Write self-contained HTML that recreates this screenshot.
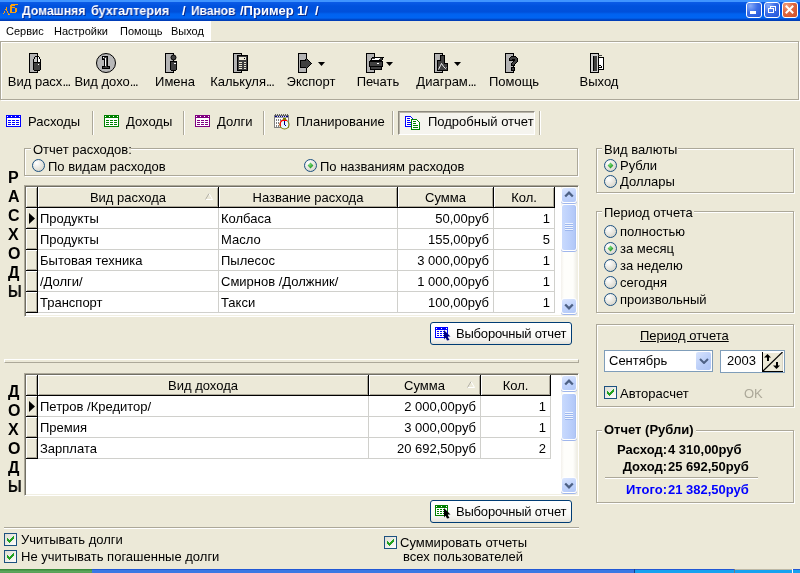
<!DOCTYPE html>
<html><head><meta charset="utf-8"><style>
*{margin:0;padding:0;box-sizing:border-box}
html,body{width:800px;height:573px;overflow:hidden;background:#ECE9D8;font-family:"Liberation Sans",sans-serif;font-size:13px;color:#000}
.a{position:absolute;display:block}
.t{position:absolute;white-space:nowrap;line-height:13px;will-change:transform}
.d{letter-spacing:-1px}
</style></head><body>
<div class="a" style="left:0px;top:0px;width:800px;height:21px;background:linear-gradient(#3F94FF 0px,#3F94FF 1.5px,#0A5AE6 2.5px,#0052DE 6px,#0050DA 12px,#0062F0 14px,#0064F2 18px,#0048C8 19.5px,#0038B0 21px)"></div>
<svg class="a" style="left:2px;top:3px;" width="17" height="13" viewBox="0 0 17 13" shape-rendering="crispEdges"><g fill="#F8A00E"><rect x="4" y="4" width="1" height="2"/><rect x="3" y="6" width="2" height="1"/><rect x="4" y="7" width="1" height="1"/><rect x="5" y="8" width="1" height="2"/><rect x="6" y="10" width="1" height="1"/><rect x="6" y="11" width="2" height="1"/><rect x="2" y="8" width="1" height="2"/><rect x="1" y="10" width="1" height="1"/><rect x="9" y="1" width="7" height="1"/><rect x="9" y="2" width="4" height="1"/><rect x="8" y="2" width="2" height="8"/><rect x="10" y="4" width="3" height="1"/><rect x="13" y="5" width="2" height="4"/><rect x="10" y="9" width="4" height="1"/></g></svg>
<div class="t" style="left:22px;top:4px;font-size:13px;font-weight:bold;color:#fff;text-shadow:1px 1px 0 #0A2A8C;transform:scaleX(0.935);transform-origin:0 0">Домашняя</div>
<div class="t" style="left:91px;top:4px;font-size:13px;font-weight:bold;color:#fff;text-shadow:1px 1px 0 #0A2A8C;transform:scaleX(0.97);transform-origin:0 0">бухгалтерия</div>
<div class="t" style="left:182px;top:4px;font-size:13px;font-weight:bold;color:#fff;text-shadow:1px 1px 0 #0A2A8C;transform:scaleX(1);transform-origin:0 0">/</div>
<div class="t" style="left:191px;top:4px;font-size:13px;font-weight:bold;color:#fff;text-shadow:1px 1px 0 #0A2A8C;transform:scaleX(0.92);transform-origin:0 0">Иванов</div>
<div class="t" style="left:240px;top:4px;font-size:13px;font-weight:bold;color:#fff;text-shadow:1px 1px 0 #0A2A8C;transform:scaleX(1.0);transform-origin:0 0">/Пример</div>
<div class="t" style="left:297px;top:4px;font-size:13px;font-weight:bold;color:#fff;text-shadow:1px 1px 0 #0A2A8C;transform:scaleX(1.0);transform-origin:0 0">1/</div>
<div class="t" style="left:315px;top:4px;font-size:13px;font-weight:bold;color:#fff;text-shadow:1px 1px 0 #0A2A8C;transform:scaleX(1);transform-origin:0 0">/</div>
<div class="a" style="left:746px;top:2px;width:16px;height:16px;border:1px solid #fff;border-radius:3px;background:radial-gradient(circle at 25% 20%,#86AAF8 0%,#3C6FE8 45%,#2152D6 100%)"></div>
<div class="a" style="left:764px;top:2px;width:16px;height:16px;border:1px solid #fff;border-radius:3px;background:radial-gradient(circle at 25% 20%,#86AAF8 0%,#3C6FE8 45%,#2152D6 100%)"></div>
<div class="a" style="left:782px;top:2px;width:16px;height:16px;border:1px solid #fff;border-radius:3px;background:radial-gradient(circle at 25% 20%,#F0A080 0%,#E06A44 40%,#D04E26 100%)"></div>
<div class="a" style="left:750px;top:11px;width:6px;height:3px;background:#fff"></div>
<svg class="a" style="left:767px;top:5px;" width="10" height="9" viewBox="0 0 10 9" shape-rendering="crispEdges"><path d="M3 1 H8.5 V6 M3 1 V3" stroke="#fff" stroke-width="1" fill="none"/><rect x="3" y="1" width="6" height="1" fill="#fff"/><rect x="1.5" y="3.5" width="5" height="4" fill="none" stroke="#fff"/><rect x="1" y="3" width="6" height="1" fill="#fff"/></svg>
<svg class="a" style="left:785px;top:5px;" width="9" height="9" viewBox="0 0 9 9" shape-rendering="crispEdges"><path d="M1.5 1.5 L7.5 7.5 M7.5 1.5 L1.5 7.5" stroke="#fff" stroke-width="2" stroke-linecap="square" shape-rendering="geometricPrecision"/></svg>
<div class="a" style="left:0px;top:21px;width:211px;height:20px;background:#fff"></div>
<div class="t" style="left:6px;top:25px;font-size:11px;font-weight:normal;color:#000;">Сервис</div>
<div class="t" style="left:54px;top:25px;font-size:11px;font-weight:normal;color:#000;">Настройки</div>
<div class="t" style="left:120px;top:25px;font-size:11px;font-weight:normal;color:#000;">Помощь</div>
<div class="t" style="left:171px;top:25px;font-size:11px;font-weight:normal;color:#000;">Выход</div>
<div class="a" style="left:0px;top:41px;width:799px;height:59px;border-top:1px solid #ACA899;border-left:1px solid #ACA899;border-bottom:1px solid #ACA899;border-right:1px solid #ACA899;box-shadow:inset 1px 1px 0 #fff, 1px 1px 0 #fff"></div>
<div class="t" style="left:-11.25px;top:75px;font-size:13px;font-weight:normal;color:#000;width:100px;text-align:center">Вид расх<span class=d>...</span></div>
<div class="t" style="left:55.5px;top:75px;font-size:13px;font-weight:normal;color:#000;width:100px;text-align:center">Вид дохо<span class=d>...</span></div>
<div class="t" style="left:124.5px;top:75px;font-size:13px;font-weight:normal;color:#000;width:100px;text-align:center">Имена</div>
<div class="t" style="left:191.9px;top:75px;font-size:13px;font-weight:normal;color:#000;width:100px;text-align:center">Калькуля<span class=d>...</span></div>
<div class="t" style="left:260.6px;top:75px;font-size:13px;font-weight:normal;color:#000;width:100px;text-align:center">Экспорт</div>
<div class="t" style="left:328.1px;top:75px;font-size:13px;font-weight:normal;color:#000;width:100px;text-align:center">Печать</div>
<div class="t" style="left:395.5px;top:75px;font-size:13px;font-weight:normal;color:#000;width:100px;text-align:center">Диаграм<span class=d>...</span></div>
<div class="t" style="left:463.75px;top:75px;font-size:13px;font-weight:normal;color:#000;width:100px;text-align:center">Помощь</div>
<div class="t" style="left:549.25px;top:75px;font-size:13px;font-weight:normal;color:#000;width:100px;text-align:center">Выход</div>
<svg class="a" style="left:29px;top:53px;" width="16" height="20" viewBox="0 0 16 20" shape-rendering="crispEdges"><rect x="0.5" y="0.5" width="8" height="19" fill="#B4B4B4" stroke="#000"/><path d="M4.5 6.5 L6.5 3.5 L9.5 3.5 L11.5 6.5 L11.5 16.5 L10.5 17.5 L5.5 17.5 L4.5 16.5 Z" fill="#404040" stroke="#000"/><path d="M5 7 L6.8 4 L8 4 L8 9 L5 9Z" fill="#C8C8C8"/><path d="M8 4 L9.3 4 L11 7 L11 9 L8 9Z" fill="#fff"/><rect x="5" y="9" width="6" height="1" fill="#000"/><rect x="8" y="4" width="1" height="5" fill="#000"/><rect x="9" y="11" width="1" height="1" fill="#fff"/></svg>
<svg class="a" style="left:96px;top:53px;" width="20" height="20" viewBox="0 0 20 20" shape-rendering="crispEdges"><circle cx="10" cy="10" r="9.5" fill="#B8B8B8" stroke="#000" shape-rendering="geometricPrecision"/><path d="M6.5 3.5 L11.5 3.5 L11.5 13.5 L13.5 13.5 L13.5 15.5 L6.5 15.5 L6.5 13.5 L8.5 13.5 L8.5 6.5 L6.5 6.5 Z" fill="#404040" stroke="#000"/><rect x="9" y="5" width="1" height="8" fill="#fff"/><rect x="7" y="4" width="1" height="1" fill="#fff"/></svg>
<svg class="a" style="left:165px;top:53px;" width="16" height="20" viewBox="0 0 16 20" shape-rendering="crispEdges"><rect x="0.5" y="0.5" width="8" height="19" fill="#B4B4B4" stroke="#000"/><circle cx="8.5" cy="4.5" r="2.5" fill="#404040" stroke="#000" shape-rendering="geometricPrecision"/><path d="M5.5 8.5 L11.5 8.5 L11.5 16.5 L10.5 17.5 L6.5 17.5 L5.5 16.5 Z" fill="#404040" stroke="#000"/><rect x="9" y="10" width="2" height="1" fill="#fff"/></svg>
<svg class="a" style="left:233px;top:53px;" width="16" height="20" viewBox="0 0 16 20" shape-rendering="crispEdges"><rect x="0.5" y="0.5" width="8" height="19" fill="#B4B4B4" stroke="#000"/><rect x="4.5" y="2.5" width="10" height="15" fill="#404040" stroke="#000"/><rect x="6" y="4" width="7" height="3" fill="#ECE8D8"/><rect x="11" y="5" width="1" height="1" fill="#000"/><rect x="6" y="9" width="2" height="1" fill="#EDE8D5"/><rect x="6" y="11" width="2" height="1" fill="#EDE8D5"/><rect x="6" y="13" width="2" height="1" fill="#EDE8D5"/><rect x="6" y="15" width="2" height="1" fill="#EDE8D5"/><rect x="8" y="9" width="1" height="1" fill="#EDE8D5"/><rect x="8" y="11" width="1" height="1" fill="#EDE8D5"/><rect x="8" y="13" width="1" height="1" fill="#EDE8D5"/><rect x="8" y="15" width="1" height="1" fill="#EDE8D5"/><rect x="11" y="9" width="2" height="1" fill="#EDE8D5"/><rect x="11" y="11" width="2" height="1" fill="#EDE8D5"/><rect x="11" y="13" width="2" height="1" fill="#EDE8D5"/><rect x="11" y="15" width="2" height="1" fill="#EDE8D5"/></svg>
<svg class="a" style="left:298px;top:53px;" width="30" height="20" viewBox="0 0 30 20" shape-rendering="crispEdges"><rect x="0.5" y="0.5" width="8" height="19" fill="#B4B4B4" stroke="#000"/><path d="M2.5 7.5 L7.5 7.5 L7.5 4.5 L13.5 10.5 L7.5 16.5 L7.5 14.5 L2.5 14.5 Z" fill="#404040" stroke="#000"/><rect x="1" y="1" width="7" height="5" fill="#B4B4B4"/><rect x="1" y="15" width="7" height="4" fill="#B4B4B4"/><path d="M20 9 L27 9 L23.5 13 Z" fill="#000" shape-rendering="geometricPrecision"/></svg>
<svg class="a" style="left:366px;top:53px;" width="30" height="20" viewBox="0 0 30 20" shape-rendering="crispEdges"><rect x="0.5" y="0.5" width="8" height="19" fill="#B4B4B4" stroke="#000"/><path d="M6.5 4.5 L17.5 4.5 L15.5 7.5 L4.5 7.5 Z" fill="#404040" stroke="#000"/><rect x="9" y="5" width="5" height="1" fill="#fff"/><rect x="6" y="6" width="7" height="1" fill="#fff"/><rect x="3.5" y="8.5" width="13" height="5" fill="#404040" stroke="#000"/><rect x="4.5" y="13.5" width="11" height="3" fill="#404040" stroke="#000"/><rect x="11" y="10" width="2" height="1" fill="#fff"/><path d="M20 9 L27 9 L23.5 13 Z" fill="#000" shape-rendering="geometricPrecision"/></svg>
<svg class="a" style="left:434px;top:53px;" width="30" height="20" viewBox="0 0 30 20" shape-rendering="crispEdges"><rect x="0.5" y="0.5" width="8" height="19" fill="#B4B4B4" stroke="#000"/><path d="M3.5 7.5 L6.5 7.5 L6.5 2.5 L10.5 2.5 L10.5 10.5 L13.5 10.5 L13.5 17.5 L3.5 17.5 Z" fill="#404040" stroke="#000"/><path d="M4.5 16.5 L6.5 12.5 L7.5 10.5 L9.5 13.5 L11.5 15.5 L12.5 14.5" stroke="#fff" fill="none" stroke-width="0.9" shape-rendering="geometricPrecision"/><path d="M20 9 L27 9 L23.5 13 Z" fill="#000" shape-rendering="geometricPrecision"/></svg>
<svg class="a" style="left:505px;top:53px;" width="16" height="20" viewBox="0 0 16 20" shape-rendering="crispEdges"><rect x="0.5" y="0.5" width="8" height="19" fill="#B4B4B4" stroke="#000"/><path d="M4.5 5.5 L6.5 3.5 L10.5 3.5 L12.5 5.5 L12.5 8.5 L9.5 11.5 L9.5 12.5 L6.5 12.5 L6.5 10.5 L9.5 7.5 L9.5 6.5 L7.5 6.5 L7.5 7.5 L4.5 7.5 Z" fill="#404040" stroke="#000"/><rect x="6.5" y="14.5" width="3" height="3" fill="#404040" stroke="#000"/></svg>
<svg class="a" style="left:590px;top:53px;" width="16" height="20" viewBox="0 0 16 20" shape-rendering="crispEdges"><rect x="0.5" y="0.5" width="8" height="19" fill="#D0D0D0" stroke="#000"/><rect x="3" y="3" width="4" height="15" fill="#404040"/><rect x="2.5" y="2.5" width="1" height="15" fill="#000"/><rect x="8.5" y="4.5" width="5" height="12" fill="#fff" stroke="#000"/><rect x="8" y="2" width="4" height="1" fill="#404040"/><path d="M9 15 L9 12 L10 12 L12 14 L12 15 Z" fill="#000"/><rect x="9" y="13" width="2" height="1" fill="#fff"/></svg>
<svg class="a" style="left:6px;top:115px;" width="15" height="12" viewBox="0 0 15 12" shape-rendering="crispEdges"><rect x="0" y="0" width="15" height="12" fill="#0000FF"/><rect x="1" y="3" width="13" height="8" fill="#fff"/><rect x="1" y="1" width="1" height="1" fill="#fff"/><rect x="5" y="1" width="1" height="1" fill="#fff"/><rect x="9" y="1" width="1" height="1" fill="#fff"/><rect x="13" y="1" width="1" height="1" fill="#fff"/><rect x="2" y="5" width="3" height="1" fill="#0000FF"/><rect x="6" y="5" width="3" height="1" fill="#0000FF"/><rect x="10" y="5" width="3" height="1" fill="#0000FF"/><rect x="2" y="7" width="3" height="1" fill="#0000FF"/><rect x="6" y="7" width="3" height="1" fill="#0000FF"/><rect x="10" y="7" width="3" height="1" fill="#0000FF"/><rect x="2" y="9" width="3" height="1" fill="#0000FF"/><rect x="6" y="9" width="3" height="1" fill="#0000FF"/><rect x="10" y="9" width="3" height="1" fill="#0000FF"/></svg>
<div class="t" style="left:28px;top:115px;font-size:13px;font-weight:normal;color:#000;">Расходы</div>
<div class="a" style="left:92px;top:111px;width:2px;height:24px;border-left:1px solid #ACA899;border-right:1px solid #fff"></div>
<svg class="a" style="left:104px;top:115px;" width="15" height="12" viewBox="0 0 15 12" shape-rendering="crispEdges"><rect x="0" y="0" width="15" height="12" fill="#008000"/><rect x="1" y="3" width="13" height="8" fill="#fff"/><rect x="1" y="1" width="1" height="1" fill="#fff"/><rect x="5" y="1" width="1" height="1" fill="#fff"/><rect x="9" y="1" width="1" height="1" fill="#fff"/><rect x="13" y="1" width="1" height="1" fill="#fff"/><rect x="2" y="5" width="3" height="1" fill="#008000"/><rect x="6" y="5" width="3" height="1" fill="#008000"/><rect x="10" y="5" width="3" height="1" fill="#008000"/><rect x="2" y="7" width="3" height="1" fill="#008000"/><rect x="6" y="7" width="3" height="1" fill="#008000"/><rect x="10" y="7" width="3" height="1" fill="#008000"/><rect x="2" y="9" width="3" height="1" fill="#008000"/><rect x="6" y="9" width="3" height="1" fill="#008000"/><rect x="10" y="9" width="3" height="1" fill="#008000"/></svg>
<div class="t" style="left:126px;top:115px;font-size:13px;font-weight:normal;color:#000;">Доходы</div>
<div class="a" style="left:183px;top:111px;width:2px;height:24px;border-left:1px solid #ACA899;border-right:1px solid #fff"></div>
<svg class="a" style="left:195px;top:115px;" width="15" height="12" viewBox="0 0 15 12" shape-rendering="crispEdges"><rect x="0" y="0" width="15" height="12" fill="#800080"/><rect x="1" y="3" width="13" height="8" fill="#fff"/><rect x="1" y="1" width="1" height="1" fill="#fff"/><rect x="5" y="1" width="1" height="1" fill="#fff"/><rect x="9" y="1" width="1" height="1" fill="#fff"/><rect x="13" y="1" width="1" height="1" fill="#fff"/><rect x="2" y="5" width="3" height="1" fill="#800080"/><rect x="6" y="5" width="3" height="1" fill="#800080"/><rect x="10" y="5" width="3" height="1" fill="#800080"/><rect x="2" y="7" width="3" height="1" fill="#800080"/><rect x="6" y="7" width="3" height="1" fill="#800080"/><rect x="10" y="7" width="3" height="1" fill="#800080"/><rect x="2" y="9" width="3" height="1" fill="#800080"/><rect x="6" y="9" width="3" height="1" fill="#800080"/><rect x="10" y="9" width="3" height="1" fill="#800080"/></svg>
<div class="t" style="left:217px;top:115px;font-size:13px;font-weight:normal;color:#000;">Долги</div>
<div class="a" style="left:263px;top:111px;width:2px;height:24px;border-left:1px solid #ACA899;border-right:1px solid #fff"></div>
<svg class="a" style="left:274px;top:114px;" width="16" height="16" viewBox="0 0 16 16" shape-rendering="crispEdges"><rect x="0.5" y="1.5" width="14" height="12" fill="#fff" stroke="#808080"/><rect x="1" y="2" width="13" height="1" fill="#000080"/><rect x="3" y="2" width="1" height="1" fill="#E0E0F0"/><rect x="5" y="2" width="1" height="1" fill="#E0E0F0"/><rect x="7" y="2" width="1" height="1" fill="#E0E0F0"/><rect x="9" y="2" width="1" height="1" fill="#E0E0F0"/><rect x="11" y="2" width="1" height="1" fill="#E0E0F0"/><rect x="1" y="3" width="13" height="1" fill="#A0A0A0"/><rect x="1" y="0" width="1" height="2" fill="#606060"/><rect x="3" y="0" width="1" height="2" fill="#606060"/><rect x="5" y="0" width="1" height="2" fill="#606060"/><rect x="7" y="0" width="1" height="2" fill="#606060"/><rect x="9" y="0" width="1" height="2" fill="#606060"/><rect x="11" y="0" width="1" height="2" fill="#606060"/><rect x="13" y="0" width="1" height="2" fill="#606060"/><rect x="2" y="5" width="1" height="2" fill="#808080"/><rect x="2" y="8" width="1" height="2" fill="#808080"/><rect x="2" y="11" width="1" height="2" fill="#808080"/><rect x="4" y="5" width="1" height="2" fill="#808080"/><rect x="4" y="8" width="1" height="2" fill="#808080"/><rect x="4" y="11" width="1" height="2" fill="#808080"/><rect x="6" y="5" width="1" height="2" fill="#808080"/><rect x="6" y="8" width="1" height="2" fill="#808080"/><rect x="6" y="11" width="1" height="2" fill="#808080"/><circle cx="10.5" cy="10.5" r="4.5" fill="#EAF8FF" stroke="#808000" stroke-width="1.2" shape-rendering="geometricPrecision"/><path d="M6.5 12 A4.5 4.5 0 0 1 9 6.2 L13 6.4" stroke="#FF0000" stroke-width="1.3" fill="none" shape-rendering="geometricPrecision"/><rect x="10" y="7" width="1" height="4" fill="#000080"/><rect x="11" y="11" width="1" height="1" fill="#000080"/><rect x="9" y="4" width="3" height="2" fill="#808000"/></svg>
<div class="t" style="left:296px;top:115px;font-size:13px;font-weight:normal;color:#000;">Планирование</div>
<div class="a" style="left:392px;top:111px;width:2px;height:24px;border-left:1px solid #ACA899;border-right:1px solid #fff"></div>
<div class="a" style="left:398px;top:111px;width:137px;height:24px;border-top:1px solid #8D8A7F;border-left:1px solid #8D8A7F;border-bottom:1px solid #fff;border-right:1px solid #fff;box-shadow:inset 1px 1px 0 #B8B4A8;background:#F5F4EE"></div>
<svg class="a" style="left:404px;top:115px;" width="17" height="16" viewBox="0 0 17 16" shape-rendering="crispEdges"><path d="M1.5 1.5 L6.5 1.5 L8.5 3.5 L8.5 11.5 L1.5 11.5 Z" fill="#fff" stroke="#0000FF" stroke-width="1.2"/><rect x="3" y="3" width="3" height="1" fill="#0000FF"/><rect x="3" y="5" width="3" height="1" fill="#0000FF"/><rect x="3" y="7" width="4" height="1" fill="#0000FF"/><rect x="3" y="9" width="4" height="1" fill="#0000FF"/><path d="M7.5 4.5 L12.5 4.5 L15.5 7.5 L15.5 14.5 L7.5 14.5 Z" fill="#fff" stroke="#008000" stroke-width="1.2"/><rect x="9" y="6" width="3" height="1" fill="#008000"/><rect x="9" y="8" width="3" height="1" fill="#008000"/><rect x="9" y="10" width="5" height="1" fill="#008000"/><rect x="9" y="12" width="5" height="1" fill="#008000"/></svg>
<div class="t" style="left:428px;top:115px;font-size:13px;font-weight:normal;color:#000;">Подробный отчет</div>
<div class="a" style="left:539px;top:111px;width:2px;height:24px;border-left:1px solid #ACA899;border-right:1px solid #fff"></div>
<svg width="0" height="0" style="position:absolute"><defs><radialGradient id="rg" cx="0.35" cy="0.3" r="0.8"><stop offset="0" stop-color="#fff"/><stop offset="1" stop-color="#D4D2C6"/></radialGradient><radialGradient id="rgon" cx="0.35" cy="0.3" r="0.8"><stop offset="0" stop-color="#7EE07E"/><stop offset="1" stop-color="#0F8A0F"/></radialGradient><linearGradient id="cg" x1="0" y1="0" x2="1" y2="1"><stop offset="0" stop-color="#DCDAD0"/><stop offset="1" stop-color="#fff"/></linearGradient></defs></svg>
<div class="a" style="left:25px;top:149px;width:554px;height:28px;border:1px solid #fff"></div>
<div class="a" style="left:24px;top:148px;width:554px;height:28px;border:1px solid #ACA899"></div>
<div class="a" style="left:31px;top:143px;width:100px;height:12px;background:#ECE9D8"></div>
<div class="t" style="left:33px;top:143px;font-size:13px;font-weight:normal;color:#000;">Отчет расходов:</div>
<svg class="a" style="left:32px;top:159px;" width="13" height="13" viewBox="0 0 13 13" shape-rendering="crispEdges"><circle cx="6.5" cy="6.5" r="6" fill="url(#rg)" stroke="#1C5180" shape-rendering="geometricPrecision"/></svg>
<div class="t" style="left:48px;top:160px;font-size:13px;font-weight:normal;color:#000;">По видам расходов</div>
<svg class="a" style="left:304px;top:159px;" width="13" height="13" viewBox="0 0 13 13" shape-rendering="crispEdges"><circle cx="6.5" cy="6.5" r="6" fill="url(#rg)" stroke="#1C5180" shape-rendering="geometricPrecision"/><path d="M6.5 3.6 L9.4 6.5 L6.5 9.4 L3.6 6.5 Z" fill="url(#rgon)" shape-rendering="geometricPrecision"/></svg>
<div class="t" style="left:320px;top:160px;font-size:13px;font-weight:normal;color:#000;">По названиям расходов</div>
<div class="t" style="left:8px;top:170px;font-size:16px;font-weight:bold;color:#000;line-height:16px">Р</div>
<div class="t" style="left:8px;top:189px;font-size:16px;font-weight:bold;color:#000;line-height:16px">А</div>
<div class="t" style="left:8px;top:208px;font-size:16px;font-weight:bold;color:#000;line-height:16px">С</div>
<div class="t" style="left:8px;top:227px;font-size:16px;font-weight:bold;color:#000;line-height:16px">Х</div>
<div class="t" style="left:8px;top:246px;font-size:16px;font-weight:bold;color:#000;line-height:16px">О</div>
<div class="t" style="left:8px;top:265px;font-size:16px;font-weight:bold;color:#000;line-height:16px">Д</div>
<div class="t" style="left:8px;top:284px;font-size:16px;font-weight:bold;color:#000;line-height:16px;transform:scaleX(0.87);transform-origin:0 0">Ы</div>
<div class="t" style="left:8px;top:384px;font-size:16px;font-weight:bold;color:#000;line-height:16px">Д</div>
<div class="t" style="left:8px;top:403px;font-size:16px;font-weight:bold;color:#000;line-height:16px">О</div>
<div class="t" style="left:8px;top:422px;font-size:16px;font-weight:bold;color:#000;line-height:16px">Х</div>
<div class="t" style="left:8px;top:441px;font-size:16px;font-weight:bold;color:#000;line-height:16px">О</div>
<div class="t" style="left:8px;top:460px;font-size:16px;font-weight:bold;color:#000;line-height:16px">Д</div>
<div class="t" style="left:8px;top:479px;font-size:16px;font-weight:bold;color:#000;line-height:16px;transform:scaleX(0.87);transform-origin:0 0">Ы</div>
<div class="a" style="left:24px;top:185px;width:555px;height:132px;background:#fff;border-top:1px solid #ACA899;border-left:1px solid #ACA899;border-bottom:1px solid #fff;border-right:1px solid #fff;box-shadow:inset 1px 1px 0 #716F64, inset -1px -1px 0 #F1EFE2"></div>
<div class="a" style="left:26px;top:187px;width:11px;height:20px;background:#ECE9D8;border-top:1px solid #fff;border-left:1px solid #fff;box-shadow:inset -1px -1px 0 #ACA899"></div>
<div class="a" style="left:37px;top:187px;width:1px;height:21px;background:#000"></div>
<div class="a" style="left:38px;top:187px;width:180px;height:20px;background:#ECE9D8;border-top:1px solid #fff;border-left:1px solid #fff;box-shadow:inset -1px -1px 0 #ACA899"></div>
<div class="a" style="left:218px;top:187px;width:1px;height:21px;background:#000"></div>
<div class="a" style="left:219px;top:187px;width:178px;height:20px;background:#ECE9D8;border-top:1px solid #fff;border-left:1px solid #fff;box-shadow:inset -1px -1px 0 #ACA899"></div>
<div class="a" style="left:397px;top:187px;width:1px;height:21px;background:#000"></div>
<div class="a" style="left:398px;top:187px;width:95px;height:20px;background:#ECE9D8;border-top:1px solid #fff;border-left:1px solid #fff;box-shadow:inset -1px -1px 0 #ACA899"></div>
<div class="a" style="left:493px;top:187px;width:1px;height:21px;background:#000"></div>
<div class="a" style="left:494px;top:187px;width:60px;height:20px;background:#ECE9D8;border-top:1px solid #fff;border-left:1px solid #fff;box-shadow:inset -1px -1px 0 #ACA899"></div>
<div class="a" style="left:554px;top:187px;width:1px;height:21px;background:#000"></div>
<div class="a" style="left:26px;top:207px;width:529px;height:1px;background:#000"></div>
<div class="t" style="left:38px;top:191px;font-size:13px;font-weight:normal;color:#000;width:180px;text-align:center">Вид расхода</div>
<svg class="a" style="left:205px;top:193px;" width="8" height="7" viewBox="0 0 8 7" shape-rendering="crispEdges"><path d="M0.5 6.5 L4 0.5 L7.5 6.5 Z" fill="none" stroke="#fff" shape-rendering="geometricPrecision"/><path d="M0.5 6.5 L4 0.5" stroke="#ACA899" fill="none" shape-rendering="geometricPrecision"/></svg>
<div class="t" style="left:219px;top:191px;font-size:13px;font-weight:normal;color:#000;width:178px;text-align:center">Название расхода</div>
<div class="t" style="left:398px;top:191px;font-size:13px;font-weight:normal;color:#000;width:95px;text-align:center">Сумма</div>
<div class="t" style="left:494px;top:191px;font-size:13px;font-weight:normal;color:#000;width:60px;text-align:center">Кол.</div>
<div class="a" style="left:26px;top:208px;width:11px;height:20px;background:#ECE9D8;border-top:1px solid #fff;border-left:1px solid #fff;box-shadow:inset -1px -1px 0 #ACA899"></div>
<div class="a" style="left:37px;top:208px;width:1px;height:21px;background:#000"></div>
<div class="a" style="left:26px;top:228px;width:12px;height:1px;background:#000"></div>
<svg class="a" style="left:29px;top:213px;" width="6" height="11" viewBox="0 0 6 11" shape-rendering="crispEdges"><path d="M0 0 L6 5.5 L0 11 Z" fill="#000" shape-rendering="geometricPrecision"/></svg>
<div class="a" style="left:38px;top:228px;width:517px;height:1px;background:#D0D0CC"></div>
<div class="a" style="left:218px;top:208px;width:1px;height:21px;background:#D0D0CC"></div>
<div class="a" style="left:397px;top:208px;width:1px;height:21px;background:#D0D0CC"></div>
<div class="a" style="left:493px;top:208px;width:1px;height:21px;background:#D0D0CC"></div>
<div class="a" style="left:554px;top:208px;width:1px;height:21px;background:#D0D0CC"></div>
<div class="t" style="left:40px;top:212px;font-size:13px;font-weight:normal;color:#000;">Продукты</div>
<div class="t" style="left:221px;top:212px;font-size:13px;font-weight:normal;color:#000;">Колбаса</div>
<div class="t" style="left:398px;top:212px;font-size:13px;font-weight:normal;color:#000;width:91px;text-align:right">50,00руб</div>
<div class="t" style="left:494px;top:212px;font-size:13px;font-weight:normal;color:#000;width:56px;text-align:right">1</div>
<div class="a" style="left:26px;top:229px;width:11px;height:20px;background:#ECE9D8;border-top:1px solid #fff;border-left:1px solid #fff;box-shadow:inset -1px -1px 0 #ACA899"></div>
<div class="a" style="left:37px;top:229px;width:1px;height:21px;background:#000"></div>
<div class="a" style="left:26px;top:249px;width:12px;height:1px;background:#000"></div>
<div class="a" style="left:38px;top:249px;width:517px;height:1px;background:#D0D0CC"></div>
<div class="a" style="left:218px;top:229px;width:1px;height:21px;background:#D0D0CC"></div>
<div class="a" style="left:397px;top:229px;width:1px;height:21px;background:#D0D0CC"></div>
<div class="a" style="left:493px;top:229px;width:1px;height:21px;background:#D0D0CC"></div>
<div class="a" style="left:554px;top:229px;width:1px;height:21px;background:#D0D0CC"></div>
<div class="t" style="left:40px;top:233px;font-size:13px;font-weight:normal;color:#000;">Продукты</div>
<div class="t" style="left:221px;top:233px;font-size:13px;font-weight:normal;color:#000;">Масло</div>
<div class="t" style="left:398px;top:233px;font-size:13px;font-weight:normal;color:#000;width:91px;text-align:right">155,00руб</div>
<div class="t" style="left:494px;top:233px;font-size:13px;font-weight:normal;color:#000;width:56px;text-align:right">5</div>
<div class="a" style="left:26px;top:250px;width:11px;height:20px;background:#ECE9D8;border-top:1px solid #fff;border-left:1px solid #fff;box-shadow:inset -1px -1px 0 #ACA899"></div>
<div class="a" style="left:37px;top:250px;width:1px;height:21px;background:#000"></div>
<div class="a" style="left:26px;top:270px;width:12px;height:1px;background:#000"></div>
<div class="a" style="left:38px;top:270px;width:517px;height:1px;background:#D0D0CC"></div>
<div class="a" style="left:218px;top:250px;width:1px;height:21px;background:#D0D0CC"></div>
<div class="a" style="left:397px;top:250px;width:1px;height:21px;background:#D0D0CC"></div>
<div class="a" style="left:493px;top:250px;width:1px;height:21px;background:#D0D0CC"></div>
<div class="a" style="left:554px;top:250px;width:1px;height:21px;background:#D0D0CC"></div>
<div class="t" style="left:40px;top:254px;font-size:13px;font-weight:normal;color:#000;">Бытовая техника</div>
<div class="t" style="left:221px;top:254px;font-size:13px;font-weight:normal;color:#000;">Пылесос</div>
<div class="t" style="left:398px;top:254px;font-size:13px;font-weight:normal;color:#000;width:91px;text-align:right">3 000,00руб</div>
<div class="t" style="left:494px;top:254px;font-size:13px;font-weight:normal;color:#000;width:56px;text-align:right">1</div>
<div class="a" style="left:26px;top:271px;width:11px;height:20px;background:#ECE9D8;border-top:1px solid #fff;border-left:1px solid #fff;box-shadow:inset -1px -1px 0 #ACA899"></div>
<div class="a" style="left:37px;top:271px;width:1px;height:21px;background:#000"></div>
<div class="a" style="left:26px;top:291px;width:12px;height:1px;background:#000"></div>
<div class="a" style="left:38px;top:291px;width:517px;height:1px;background:#D0D0CC"></div>
<div class="a" style="left:218px;top:271px;width:1px;height:21px;background:#D0D0CC"></div>
<div class="a" style="left:397px;top:271px;width:1px;height:21px;background:#D0D0CC"></div>
<div class="a" style="left:493px;top:271px;width:1px;height:21px;background:#D0D0CC"></div>
<div class="a" style="left:554px;top:271px;width:1px;height:21px;background:#D0D0CC"></div>
<div class="t" style="left:40px;top:275px;font-size:13px;font-weight:normal;color:#000;">/Долги/</div>
<div class="t" style="left:221px;top:275px;font-size:13px;font-weight:normal;color:#000;">Смирнов /Должник/</div>
<div class="t" style="left:398px;top:275px;font-size:13px;font-weight:normal;color:#000;width:91px;text-align:right">1 000,00руб</div>
<div class="t" style="left:494px;top:275px;font-size:13px;font-weight:normal;color:#000;width:56px;text-align:right">1</div>
<div class="a" style="left:26px;top:292px;width:11px;height:20px;background:#ECE9D8;border-top:1px solid #fff;border-left:1px solid #fff;box-shadow:inset -1px -1px 0 #ACA899"></div>
<div class="a" style="left:37px;top:292px;width:1px;height:21px;background:#000"></div>
<div class="a" style="left:26px;top:312px;width:12px;height:1px;background:#000"></div>
<div class="a" style="left:38px;top:312px;width:517px;height:1px;background:#D0D0CC"></div>
<div class="a" style="left:218px;top:292px;width:1px;height:21px;background:#D0D0CC"></div>
<div class="a" style="left:397px;top:292px;width:1px;height:21px;background:#D0D0CC"></div>
<div class="a" style="left:493px;top:292px;width:1px;height:21px;background:#D0D0CC"></div>
<div class="a" style="left:554px;top:292px;width:1px;height:21px;background:#D0D0CC"></div>
<div class="t" style="left:40px;top:296px;font-size:13px;font-weight:normal;color:#000;">Транспорт</div>
<div class="t" style="left:221px;top:296px;font-size:13px;font-weight:normal;color:#000;">Такси</div>
<div class="t" style="left:398px;top:296px;font-size:13px;font-weight:normal;color:#000;width:91px;text-align:right">100,00руб</div>
<div class="t" style="left:494px;top:296px;font-size:13px;font-weight:normal;color:#000;width:56px;text-align:right">1</div>
<div class="a" style="left:561px;top:187px;width:16px;height:128px;background:linear-gradient(90deg,#F3F1EC 0px,#FEFEFB 3px,#FEFEFB 12px,#EEEDE5 16px)"></div>
<div class="a" style="left:561px;top:187px;width:16px;height:16px;border:1px solid #fff;border-radius:3px;background:linear-gradient(160deg,#DCE7FE 0%,#C2D4FC 50%,#B3C9F7 100%);box-shadow:0 1px 0 #9FB6EC"></div>
<svg class="a" style="left:564px;top:191px;" width="10" height="7" viewBox="0 0 10 7" shape-rendering="crispEdges"><path d="M1.2 5.5 L5 1.7 L8.8 5.5" stroke="#4D6185" stroke-width="2.3" fill="none" shape-rendering="geometricPrecision"/></svg>
<div class="a" style="left:561px;top:298px;width:16px;height:16px;border:1px solid #fff;border-radius:3px;background:linear-gradient(160deg,#DCE7FE 0%,#C2D4FC 50%,#B3C9F7 100%);box-shadow:0 1px 0 #9FB6EC"></div>
<svg class="a" style="left:564px;top:303px;" width="10" height="7" viewBox="0 0 10 7" shape-rendering="crispEdges"><path d="M1.2 1.5 L5 5.3 L8.8 1.5" stroke="#4D6185" stroke-width="2.3" fill="none" shape-rendering="geometricPrecision"/></svg>
<div class="a" style="left:561px;top:204px;width:16px;height:47px;border:1px solid #fff;border-radius:3px;background:linear-gradient(90deg,#C9DAFD,#BDD1FC 50%,#B0C6F6);box-shadow:0 1px 0 #9FB6EC, inset -1px 0 0 #A9C0F2"></div>
<div class="a" style="left:565px;top:223px;width:8px;height:1px;background:#EEF4FF"></div>
<div class="a" style="left:565px;top:224px;width:8px;height:1px;background:#9DB7EE"></div>
<div class="a" style="left:565px;top:225px;width:8px;height:1px;background:#EEF4FF"></div>
<div class="a" style="left:565px;top:226px;width:8px;height:1px;background:#9DB7EE"></div>
<div class="a" style="left:565px;top:227px;width:8px;height:1px;background:#EEF4FF"></div>
<div class="a" style="left:565px;top:228px;width:8px;height:1px;background:#9DB7EE"></div>
<div class="a" style="left:565px;top:229px;width:8px;height:1px;background:#EEF4FF"></div>
<div class="a" style="left:565px;top:230px;width:8px;height:1px;background:#9DB7EE"></div>
<div class="a" style="left:24px;top:373px;width:555px;height:123px;background:#fff;border-top:1px solid #ACA899;border-left:1px solid #ACA899;border-bottom:1px solid #fff;border-right:1px solid #fff;box-shadow:inset 1px 1px 0 #716F64, inset -1px -1px 0 #F1EFE2"></div>
<div class="a" style="left:26px;top:375px;width:11px;height:20px;background:#ECE9D8;border-top:1px solid #fff;border-left:1px solid #fff;box-shadow:inset -1px -1px 0 #ACA899"></div>
<div class="a" style="left:37px;top:375px;width:1px;height:21px;background:#000"></div>
<div class="a" style="left:38px;top:375px;width:330px;height:20px;background:#ECE9D8;border-top:1px solid #fff;border-left:1px solid #fff;box-shadow:inset -1px -1px 0 #ACA899"></div>
<div class="a" style="left:368px;top:375px;width:1px;height:21px;background:#000"></div>
<div class="a" style="left:369px;top:375px;width:111px;height:20px;background:#ECE9D8;border-top:1px solid #fff;border-left:1px solid #fff;box-shadow:inset -1px -1px 0 #ACA899"></div>
<div class="a" style="left:480px;top:375px;width:1px;height:21px;background:#000"></div>
<div class="a" style="left:481px;top:375px;width:69px;height:20px;background:#ECE9D8;border-top:1px solid #fff;border-left:1px solid #fff;box-shadow:inset -1px -1px 0 #ACA899"></div>
<div class="a" style="left:550px;top:375px;width:1px;height:21px;background:#000"></div>
<div class="a" style="left:26px;top:395px;width:525px;height:1px;background:#000"></div>
<div class="t" style="left:38px;top:379px;font-size:13px;font-weight:normal;color:#000;width:330px;text-align:center">Вид дохода</div>
<div class="t" style="left:369px;top:379px;font-size:13px;font-weight:normal;color:#000;width:111px;text-align:center">Сумма</div>
<svg class="a" style="left:467px;top:381px;" width="8" height="7" viewBox="0 0 8 7" shape-rendering="crispEdges"><path d="M0.5 6.5 L4 0.5 L7.5 6.5 Z" fill="none" stroke="#fff" shape-rendering="geometricPrecision"/><path d="M0.5 6.5 L4 0.5" stroke="#ACA899" fill="none" shape-rendering="geometricPrecision"/></svg>
<div class="t" style="left:481px;top:379px;font-size:13px;font-weight:normal;color:#000;width:69px;text-align:center">Кол.</div>
<div class="a" style="left:26px;top:396px;width:11px;height:20px;background:#ECE9D8;border-top:1px solid #fff;border-left:1px solid #fff;box-shadow:inset -1px -1px 0 #ACA899"></div>
<div class="a" style="left:37px;top:396px;width:1px;height:21px;background:#000"></div>
<div class="a" style="left:26px;top:416px;width:12px;height:1px;background:#000"></div>
<svg class="a" style="left:29px;top:401px;" width="6" height="11" viewBox="0 0 6 11" shape-rendering="crispEdges"><path d="M0 0 L6 5.5 L0 11 Z" fill="#000" shape-rendering="geometricPrecision"/></svg>
<div class="a" style="left:38px;top:416px;width:513px;height:1px;background:#D0D0CC"></div>
<div class="a" style="left:368px;top:396px;width:1px;height:21px;background:#D0D0CC"></div>
<div class="a" style="left:480px;top:396px;width:1px;height:21px;background:#D0D0CC"></div>
<div class="a" style="left:550px;top:396px;width:1px;height:21px;background:#D0D0CC"></div>
<div class="t" style="left:40px;top:400px;font-size:13px;font-weight:normal;color:#000;">Петров /Кредитор/</div>
<div class="t" style="left:369px;top:400px;font-size:13px;font-weight:normal;color:#000;width:107px;text-align:right">2 000,00руб</div>
<div class="t" style="left:481px;top:400px;font-size:13px;font-weight:normal;color:#000;width:65px;text-align:right">1</div>
<div class="a" style="left:26px;top:417px;width:11px;height:20px;background:#ECE9D8;border-top:1px solid #fff;border-left:1px solid #fff;box-shadow:inset -1px -1px 0 #ACA899"></div>
<div class="a" style="left:37px;top:417px;width:1px;height:21px;background:#000"></div>
<div class="a" style="left:26px;top:437px;width:12px;height:1px;background:#000"></div>
<div class="a" style="left:38px;top:437px;width:513px;height:1px;background:#D0D0CC"></div>
<div class="a" style="left:368px;top:417px;width:1px;height:21px;background:#D0D0CC"></div>
<div class="a" style="left:480px;top:417px;width:1px;height:21px;background:#D0D0CC"></div>
<div class="a" style="left:550px;top:417px;width:1px;height:21px;background:#D0D0CC"></div>
<div class="t" style="left:40px;top:421px;font-size:13px;font-weight:normal;color:#000;">Премия</div>
<div class="t" style="left:369px;top:421px;font-size:13px;font-weight:normal;color:#000;width:107px;text-align:right">3 000,00руб</div>
<div class="t" style="left:481px;top:421px;font-size:13px;font-weight:normal;color:#000;width:65px;text-align:right">1</div>
<div class="a" style="left:26px;top:438px;width:11px;height:20px;background:#ECE9D8;border-top:1px solid #fff;border-left:1px solid #fff;box-shadow:inset -1px -1px 0 #ACA899"></div>
<div class="a" style="left:37px;top:438px;width:1px;height:21px;background:#000"></div>
<div class="a" style="left:26px;top:458px;width:12px;height:1px;background:#000"></div>
<div class="a" style="left:38px;top:458px;width:513px;height:1px;background:#D0D0CC"></div>
<div class="a" style="left:368px;top:438px;width:1px;height:21px;background:#D0D0CC"></div>
<div class="a" style="left:480px;top:438px;width:1px;height:21px;background:#D0D0CC"></div>
<div class="a" style="left:550px;top:438px;width:1px;height:21px;background:#D0D0CC"></div>
<div class="t" style="left:40px;top:442px;font-size:13px;font-weight:normal;color:#000;">Зарплата</div>
<div class="t" style="left:369px;top:442px;font-size:13px;font-weight:normal;color:#000;width:107px;text-align:right">20 692,50руб</div>
<div class="t" style="left:481px;top:442px;font-size:13px;font-weight:normal;color:#000;width:65px;text-align:right">2</div>
<div class="a" style="left:561px;top:375px;width:16px;height:119px;background:linear-gradient(90deg,#F3F1EC 0px,#FEFEFB 3px,#FEFEFB 12px,#EEEDE5 16px)"></div>
<div class="a" style="left:561px;top:375px;width:16px;height:16px;border:1px solid #fff;border-radius:3px;background:linear-gradient(160deg,#DCE7FE 0%,#C2D4FC 50%,#B3C9F7 100%);box-shadow:0 1px 0 #9FB6EC"></div>
<svg class="a" style="left:564px;top:379px;" width="10" height="7" viewBox="0 0 10 7" shape-rendering="crispEdges"><path d="M1.2 5.5 L5 1.7 L8.8 5.5" stroke="#4D6185" stroke-width="2.3" fill="none" shape-rendering="geometricPrecision"/></svg>
<div class="a" style="left:561px;top:477px;width:16px;height:16px;border:1px solid #fff;border-radius:3px;background:linear-gradient(160deg,#DCE7FE 0%,#C2D4FC 50%,#B3C9F7 100%);box-shadow:0 1px 0 #9FB6EC"></div>
<svg class="a" style="left:564px;top:482px;" width="10" height="7" viewBox="0 0 10 7" shape-rendering="crispEdges"><path d="M1.2 1.5 L5 5.3 L8.8 1.5" stroke="#4D6185" stroke-width="2.3" fill="none" shape-rendering="geometricPrecision"/></svg>
<div class="a" style="left:561px;top:393px;width:16px;height:47px;border:1px solid #fff;border-radius:3px;background:linear-gradient(90deg,#C9DAFD,#BDD1FC 50%,#B0C6F6);box-shadow:0 1px 0 #9FB6EC, inset -1px 0 0 #A9C0F2"></div>
<div class="a" style="left:565px;top:412px;width:8px;height:1px;background:#EEF4FF"></div>
<div class="a" style="left:565px;top:413px;width:8px;height:1px;background:#9DB7EE"></div>
<div class="a" style="left:565px;top:414px;width:8px;height:1px;background:#EEF4FF"></div>
<div class="a" style="left:565px;top:415px;width:8px;height:1px;background:#9DB7EE"></div>
<div class="a" style="left:565px;top:416px;width:8px;height:1px;background:#EEF4FF"></div>
<div class="a" style="left:565px;top:417px;width:8px;height:1px;background:#9DB7EE"></div>
<div class="a" style="left:565px;top:418px;width:8px;height:1px;background:#EEF4FF"></div>
<div class="a" style="left:565px;top:419px;width:8px;height:1px;background:#9DB7EE"></div>
<div class="a" style="left:430px;top:322px;width:142px;height:23px;border:1px solid #003C74;border-radius:3px;background:linear-gradient(#FFFFFF 0%,#FAFAF8 60%,#F0EFEA 85%,#E3E1D8 100%)"></div>
<svg class="a" style="left:435px;top:327px;" width="16" height="14" viewBox="0 0 16 14" shape-rendering="crispEdges"><rect x="0" y="0" width="13" height="11" fill="#0000FF"/><rect x="1" y="3" width="11" height="7" fill="#fff"/><rect x="1" y="1" width="1" height="1" fill="#fff"/><rect x="6" y="1" width="1" height="1" fill="#fff"/><rect x="11" y="1" width="1" height="1" fill="#fff"/><rect x="2" y="4" width="2" height="1" fill="#0000FF"/><rect x="5" y="4" width="2" height="1" fill="#0000FF"/><rect x="8" y="4" width="2" height="1" fill="#0000FF"/><rect x="2" y="6" width="2" height="1" fill="#0000FF"/><rect x="5" y="6" width="2" height="1" fill="#0000FF"/><rect x="8" y="6" width="2" height="1" fill="#0000FF"/><rect x="2" y="8" width="2" height="1" fill="#0000FF"/><rect x="5" y="8" width="2" height="1" fill="#0000FF"/><rect x="8" y="8" width="2" height="1" fill="#0000FF"/><path d="M9 3 L15.5 9.5 L12.5 9.5 L14.5 13 L12 13.5 L10.5 10.5 L9 12.5 Z" fill="#000080" shape-rendering="geometricPrecision"/></svg>
<div class="t" style="left:456px;top:327px;font-size:13px;font-weight:normal;color:#000;letter-spacing:-0.2px">Выборочный отчет</div>
<div class="a" style="left:430px;top:500px;width:142px;height:23px;border:1px solid #003C74;border-radius:3px;background:linear-gradient(#FFFFFF 0%,#FAFAF8 60%,#F0EFEA 85%,#E3E1D8 100%)"></div>
<svg class="a" style="left:435px;top:505px;" width="16" height="14" viewBox="0 0 16 14" shape-rendering="crispEdges"><rect x="0" y="0" width="13" height="11" fill="#008000"/><rect x="1" y="3" width="11" height="7" fill="#fff"/><rect x="1" y="1" width="1" height="1" fill="#fff"/><rect x="6" y="1" width="1" height="1" fill="#fff"/><rect x="11" y="1" width="1" height="1" fill="#fff"/><rect x="2" y="4" width="2" height="1" fill="#008000"/><rect x="5" y="4" width="2" height="1" fill="#008000"/><rect x="8" y="4" width="2" height="1" fill="#008000"/><rect x="2" y="6" width="2" height="1" fill="#008000"/><rect x="5" y="6" width="2" height="1" fill="#008000"/><rect x="8" y="6" width="2" height="1" fill="#008000"/><rect x="2" y="8" width="2" height="1" fill="#008000"/><rect x="5" y="8" width="2" height="1" fill="#008000"/><rect x="8" y="8" width="2" height="1" fill="#008000"/><path d="M9 3 L15.5 9.5 L12.5 9.5 L14.5 13 L12 13.5 L10.5 10.5 L9 12.5 Z" fill="#000" shape-rendering="geometricPrecision"/></svg>
<div class="t" style="left:456px;top:505px;font-size:13px;font-weight:normal;color:#000;letter-spacing:-0.2px">Выборочный отчет</div>
<div class="a" style="left:4px;top:359px;width:575px;height:4px;border-top:1px solid #fff;border-left:1px solid #fff;border-bottom:1px solid #ACA899;border-right:1px solid #ACA899"></div>
<div class="a" style="left:4px;top:527px;width:575px;height:2px;border-top:1px solid #ACA899;border-bottom:1px solid #fff"></div>
<svg class="a" style="left:4px;top:533px;" width="13" height="13" viewBox="0 0 13 13" shape-rendering="crispEdges"><rect x="0.5" y="0.5" width="12" height="12" fill="url(#cg)" stroke="#1C5180"/><rect x="9" y="3" width="1" height="1" fill="#21A121"/><rect x="8" y="4" width="2" height="1" fill="#21A121"/><rect x="3" y="5" width="1" height="1" fill="#21A121"/><rect x="7" y="5" width="3" height="1" fill="#21A121"/><rect x="3" y="6" width="2" height="1" fill="#21A121"/><rect x="6" y="6" width="3" height="1" fill="#21A121"/><rect x="3" y="7" width="5" height="1" fill="#21A121"/><rect x="4" y="8" width="3" height="1" fill="#21A121"/><rect x="5" y="9" width="1" height="1" fill="#21A121"/></svg>
<div class="t" style="left:21px;top:533px;font-size:13px;font-weight:normal;color:#000;">Учитывать долги</div>
<svg class="a" style="left:4px;top:550px;" width="13" height="13" viewBox="0 0 13 13" shape-rendering="crispEdges"><rect x="0.5" y="0.5" width="12" height="12" fill="url(#cg)" stroke="#1C5180"/><rect x="9" y="3" width="1" height="1" fill="#21A121"/><rect x="8" y="4" width="2" height="1" fill="#21A121"/><rect x="3" y="5" width="1" height="1" fill="#21A121"/><rect x="7" y="5" width="3" height="1" fill="#21A121"/><rect x="3" y="6" width="2" height="1" fill="#21A121"/><rect x="6" y="6" width="3" height="1" fill="#21A121"/><rect x="3" y="7" width="5" height="1" fill="#21A121"/><rect x="4" y="8" width="3" height="1" fill="#21A121"/><rect x="5" y="9" width="1" height="1" fill="#21A121"/></svg>
<div class="t" style="left:21px;top:550px;font-size:13px;font-weight:normal;color:#000;">Не учитывать погашенные долги</div>
<svg class="a" style="left:384px;top:536px;" width="13" height="13" viewBox="0 0 13 13" shape-rendering="crispEdges"><rect x="0.5" y="0.5" width="12" height="12" fill="url(#cg)" stroke="#1C5180"/><rect x="9" y="3" width="1" height="1" fill="#21A121"/><rect x="8" y="4" width="2" height="1" fill="#21A121"/><rect x="3" y="5" width="1" height="1" fill="#21A121"/><rect x="7" y="5" width="3" height="1" fill="#21A121"/><rect x="3" y="6" width="2" height="1" fill="#21A121"/><rect x="6" y="6" width="3" height="1" fill="#21A121"/><rect x="3" y="7" width="5" height="1" fill="#21A121"/><rect x="4" y="8" width="3" height="1" fill="#21A121"/><rect x="5" y="9" width="1" height="1" fill="#21A121"/></svg>
<div class="t" style="left:400px;top:536px;font-size:13px;font-weight:normal;color:#000;">Суммировать отчеты</div>
<div class="t" style="left:403px;top:550px;font-size:13px;font-weight:normal;color:#000;">всех пользователей</div>
<div class="a" style="left:597px;top:149px;width:198px;height:45px;border:1px solid #fff"></div>
<div class="a" style="left:596px;top:148px;width:198px;height:45px;border:1px solid #ACA899"></div>
<div class="a" style="left:602px;top:143px;width:76px;height:12px;background:#ECE9D8"></div>
<div class="t" style="left:604px;top:143px;font-size:13px;font-weight:normal;color:#000;">Вид валюты</div>
<svg class="a" style="left:604px;top:159px;" width="13" height="13" viewBox="0 0 13 13" shape-rendering="crispEdges"><circle cx="6.5" cy="6.5" r="6" fill="url(#rg)" stroke="#1C5180" shape-rendering="geometricPrecision"/><path d="M6.5 3.6 L9.4 6.5 L6.5 9.4 L3.6 6.5 Z" fill="url(#rgon)" shape-rendering="geometricPrecision"/></svg>
<div class="t" style="left:620px;top:159px;font-size:13px;font-weight:normal;color:#000;">Рубли</div>
<svg class="a" style="left:604px;top:175px;" width="13" height="13" viewBox="0 0 13 13" shape-rendering="crispEdges"><circle cx="6.5" cy="6.5" r="6" fill="url(#rg)" stroke="#1C5180" shape-rendering="geometricPrecision"/></svg>
<div class="t" style="left:620px;top:175px;font-size:13px;font-weight:normal;color:#000;">Доллары</div>
<div class="a" style="left:597px;top:212px;width:198px;height:102px;border:1px solid #fff"></div>
<div class="a" style="left:596px;top:211px;width:198px;height:102px;border:1px solid #ACA899"></div>
<div class="a" style="left:602px;top:206px;width:92px;height:12px;background:#ECE9D8"></div>
<div class="t" style="left:604px;top:206px;font-size:13px;font-weight:normal;color:#000;">Период отчета</div>
<svg class="a" style="left:604px;top:225px;" width="13" height="13" viewBox="0 0 13 13" shape-rendering="crispEdges"><circle cx="6.5" cy="6.5" r="6" fill="url(#rg)" stroke="#1C5180" shape-rendering="geometricPrecision"/></svg>
<div class="t" style="left:620px;top:225px;font-size:13px;font-weight:normal;color:#000;">полностью</div>
<svg class="a" style="left:604px;top:242px;" width="13" height="13" viewBox="0 0 13 13" shape-rendering="crispEdges"><circle cx="6.5" cy="6.5" r="6" fill="url(#rg)" stroke="#1C5180" shape-rendering="geometricPrecision"/><path d="M6.5 3.6 L9.4 6.5 L6.5 9.4 L3.6 6.5 Z" fill="url(#rgon)" shape-rendering="geometricPrecision"/></svg>
<div class="t" style="left:620px;top:242px;font-size:13px;font-weight:normal;color:#000;">за месяц</div>
<svg class="a" style="left:604px;top:259px;" width="13" height="13" viewBox="0 0 13 13" shape-rendering="crispEdges"><circle cx="6.5" cy="6.5" r="6" fill="url(#rg)" stroke="#1C5180" shape-rendering="geometricPrecision"/></svg>
<div class="t" style="left:620px;top:259px;font-size:13px;font-weight:normal;color:#000;">за неделю</div>
<svg class="a" style="left:604px;top:276px;" width="13" height="13" viewBox="0 0 13 13" shape-rendering="crispEdges"><circle cx="6.5" cy="6.5" r="6" fill="url(#rg)" stroke="#1C5180" shape-rendering="geometricPrecision"/></svg>
<div class="t" style="left:620px;top:276px;font-size:13px;font-weight:normal;color:#000;">сегодня</div>
<svg class="a" style="left:604px;top:293px;" width="13" height="13" viewBox="0 0 13 13" shape-rendering="crispEdges"><circle cx="6.5" cy="6.5" r="6" fill="url(#rg)" stroke="#1C5180" shape-rendering="geometricPrecision"/></svg>
<div class="t" style="left:620px;top:293px;font-size:13px;font-weight:normal;color:#000;">произвольный</div>
<div class="a" style="left:597px;top:325px;width:198px;height:83px;border:1px solid #fff"></div>
<div class="a" style="left:596px;top:324px;width:198px;height:83px;border:1px solid #ACA899"></div>
<div class="t" style="left:640px;top:329px;font-size:13px;font-weight:normal;color:#000;text-decoration:underline">Период отчета</div>
<div class="a" style="left:604px;top:350px;width:109px;height:22px;background:#fff;border:1px solid #7F9DB9"></div>
<div class="t" style="left:609px;top:354px;font-size:13px;font-weight:normal;color:#000;">Сентябрь</div>
<div class="a" style="left:696px;top:352px;width:15px;height:18px;border-radius:2px;background:linear-gradient(135deg,#D8E4FD,#B9CDF8 60%,#AFC5F6)"></div>
<svg class="a" style="left:699px;top:358px;" width="10" height="6" viewBox="0 0 10 6" shape-rendering="crispEdges"><path d="M1 1 L5 5 L9 1" stroke="#4D6185" stroke-width="2" fill="none" shape-rendering="geometricPrecision"/></svg>
<div class="a" style="left:720px;top:350px;width:65px;height:23px;background:#fff;border:1px solid #7F9DB9"></div>
<div class="t" style="left:727px;top:354px;font-size:13px;font-weight:normal;color:#000;">2003</div>
<svg class="a" style="left:762px;top:352px;" width="21" height="20" viewBox="0 0 21 20" shape-rendering="crispEdges"><rect x="0" y="0" width="21" height="20" fill="#ECE9D8"/><rect x="1" y="0" width="20" height="1" fill="#fff"/><rect x="20" y="0" width="1" height="20" fill="#D8D4C4"/><rect x="0" y="0" width="1" height="20" fill="#000"/><rect x="0" y="19" width="21" height="1" fill="#000"/><path d="M0.5 19.5 L20.5 0" stroke="#000" stroke-width="1.1" shape-rendering="geometricPrecision"/><path d="M5.5 2 L9 5.5 L2 5.5 Z" fill="#000" shape-rendering="geometricPrecision"/><rect x="4.5" y="5" width="2" height="4" fill="#000"/><path d="M14.5 17 L18 13.5 L11 13.5 Z" fill="#000" shape-rendering="geometricPrecision"/><rect x="13.5" y="10" width="2" height="4" fill="#000"/></svg>
<svg class="a" style="left:604px;top:386px;" width="13" height="13" viewBox="0 0 13 13" shape-rendering="crispEdges"><rect x="0.5" y="0.5" width="12" height="12" fill="url(#cg)" stroke="#1C5180"/><rect x="9" y="3" width="1" height="1" fill="#21A121"/><rect x="8" y="4" width="2" height="1" fill="#21A121"/><rect x="3" y="5" width="1" height="1" fill="#21A121"/><rect x="7" y="5" width="3" height="1" fill="#21A121"/><rect x="3" y="6" width="2" height="1" fill="#21A121"/><rect x="6" y="6" width="3" height="1" fill="#21A121"/><rect x="3" y="7" width="5" height="1" fill="#21A121"/><rect x="4" y="8" width="3" height="1" fill="#21A121"/><rect x="5" y="9" width="1" height="1" fill="#21A121"/></svg>
<div class="t" style="left:620px;top:387px;font-size:13px;font-weight:normal;color:#000;">Авторасчет</div>
<div class="t" style="left:744px;top:387px;font-size:13px;font-weight:normal;color:#ACA899;">OK</div>
<div class="a" style="left:597px;top:431px;width:198px;height:73px;border:1px solid #fff"></div>
<div class="a" style="left:596px;top:430px;width:198px;height:73px;border:1px solid #ACA899"></div>
<div class="a" style="left:602px;top:423px;width:94px;height:13px;background:#ECE9D8"></div>
<div class="t" style="left:604px;top:423px;font-size:13px;font-weight:bold;color:#000;">Отчет (Рубли)</div>
<div class="t" style="left:567px;top:443px;font-size:13px;font-weight:bold;color:#000;width:100px;text-align:right">Расход:</div>
<div class="t" style="left:668px;top:443px;font-size:13px;font-weight:bold;color:#000;">4 310,00руб</div>
<div class="t" style="left:567px;top:460px;font-size:13px;font-weight:bold;color:#000;width:100px;text-align:right">Доход:</div>
<div class="t" style="left:668px;top:460px;font-size:13px;font-weight:bold;color:#000;">25 692,50руб</div>
<div class="a" style="left:605px;top:477px;width:153px;height:2px;border-top:1px solid #ACA899;border-bottom:1px solid #fff"></div>
<div class="t" style="left:567px;top:483px;font-size:13px;font-weight:bold;color:#0000FF;width:100px;text-align:right">Итого:</div>
<div class="t" style="left:668px;top:483px;font-size:13px;font-weight:bold;color:#0000FF;">21 382,50руб</div>
<div class="a" style="left:0px;top:569px;width:800px;height:1px;background:#2158D4"></div>
<div class="a" style="left:0px;top:570px;width:800px;height:3px;background:#3A78E4"></div>
<div class="a" style="left:0px;top:569px;width:92px;height:4px;background:linear-gradient(#3A8A3A 0px,#3A8A3A 1px,#5FA85F 2px,#55A055 4px)"></div>
<div class="a" style="left:634px;top:570px;width:166px;height:3px;background:#17A2F0"></div>
<div class="a" style="left:634px;top:569px;width:1px;height:4px;background:#1A3E8A"></div>
<div class="a" style="left:734px;top:569px;width:58px;height:1px;background:#BDB8A5"></div>
<div class="a" style="left:734px;top:569px;width:1px;height:4px;background:#6E7A88"></div>
<div class="a" style="left:792px;top:569px;width:1px;height:4px;background:#FFFFFF"></div>
</body></html>
